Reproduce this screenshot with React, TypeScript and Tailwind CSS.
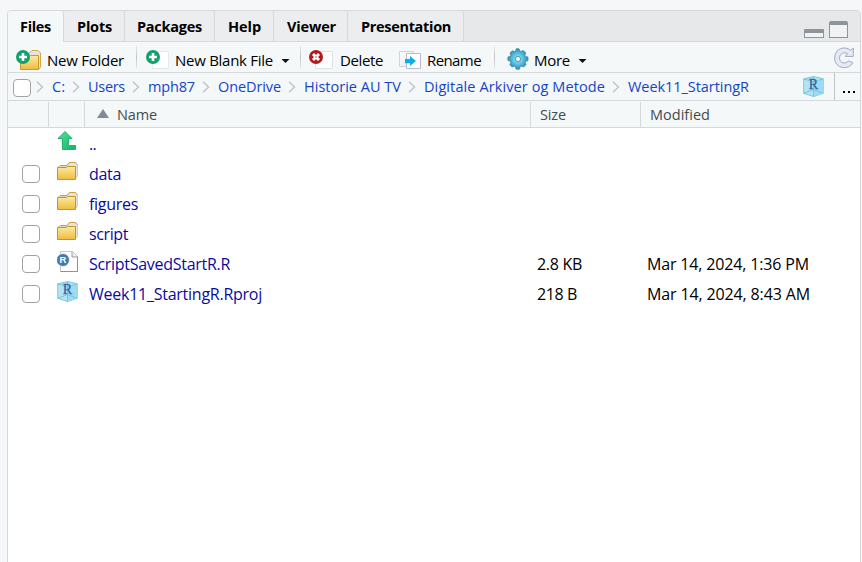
import { useLayoutEffect, useRef, useState } from "react";
import type { ReactNode } from "react";

/* Single line of text whose tracking is adjusted to fill a given width. */
function Fit({ w, children, className = "" }: { w: number; children: string; className?: string }) {
  const ref = useRef<HTMLSpanElement>(null);
  const [ls, setLs] = useState(0);
  useLayoutEffect(() => {
    if (ref.current) setLs((w - 1 - ref.current.getBoundingClientRect().width) / children.length);
  }, []);
  return (
    <span className={`flex shrink-0 pl-px ${className}`} style={{ width: w }}>
      <span ref={ref} className="whitespace-pre" style={{ letterSpacing: ls }}>{children}</span>
    </span>
  );
}

function Gradients() {
  return (
    <svg width="0" height="0" className="absolute">
      <defs>
        <linearGradient id="folder" x1="0" y1="0" x2="0" y2="1">
          <stop offset="0" stopColor="#f9eca6" />
          <stop offset="1" stopColor="#f0bb3c" />
        </linearGradient>
        <linearGradient id="arrow" x1="0" y1="0" x2="1" y2="1">
          <stop offset="0" stopColor="#52e09b" />
          <stop offset="1" stopColor="#16b466" />
        </linearGradient>
        <linearGradient id="page" x1="0" y1="0" x2="1" y2="1">
          <stop offset="0" stopColor="#ffffff" />
          <stop offset="1" stopColor="#e2e6ec" />
        </linearGradient>
        <radialGradient id="gear">
          <stop offset="0.2" stopColor="#7fe0f2" />
          <stop offset="1" stopColor="#2493c4" />
        </radialGradient>
      </defs>
    </svg>
  );
}

function Folder() {
  return (
    <svg width="22" height="20" viewBox="0 0 22 20" className="shrink-0">
      <path d="M1.5 6.5 L10 4.5 L12.5 1.5 H18.5 L20.5 3.5 V15.5 L18.5 17.5 H3 Z" fill="#e6e4df" stroke="#d9cda6" />
      <path d="M1.5 6 L3 4.5 H10 L12.5 1.5 H18.3 L20 3.6" fill="none" stroke="#c8a23e" />
      <path d="M.5 6.5 H9 L10.5 5.5 H18.5 V18.5 H.5 Z" fill="url(#folder)" stroke="#c2962e" />
    </svg>
  );
}

function Plus() {
  return (
    <>
      <circle cx="7" cy="7" r="7" fill="#12a06b" />
      <path d="M7 3 V11 M3 7 H11" stroke="#fff" strokeWidth="2.6" />
    </>
  );
}

function NewFolder() {
  return (
    <svg width="26" height="22" viewBox="0 0 26 22" className="shrink-0">
      <path d="M10 6 L14 2.5 L16 .5 H22 L24.5 3 V17 L22.5 19.5 H5 Z" fill="#e6e4df" stroke="#d0a845" />
      <path d="M4.5 6.5 H13 L14.5 5.5 H22.5 V19.5 H4.5 Z" fill="url(#folder)" stroke="#c99a2e" />
      <Plus />
    </svg>
  );
}

function NewFile() {
  return (
    <svg width="24" height="20" viewBox="0 0 24 20" className="shrink-0">
      <path d="M6.5 1.5 H22.5 V18.5 H6.5 Z" fill="#fff" stroke="#e4e9ee" />
      <Plus />
    </svg>
  );
}

function DeleteIcon() {
  return (
    <svg width="24" height="20" viewBox="0 0 24 20" className="shrink-0">
      <path d="M6.5 1.5 H23.5 V18.5 H6.5 Z" fill="#fff" stroke="#dfe3e8" />
      <circle cx="7" cy="7" r="7" fill="#b01c1c" />
      <path d="M4 4 L10 10 M10 4 L4 10" stroke="#fff" strokeWidth="3" />
      <circle cx="7" cy="7" r=".7" fill="#b01c1c" />
    </svg>
  );
}

function RenameIcon() {
  return (
    <svg width="22" height="19" viewBox="0 0 22 19" className="shrink-0">
      <path d="M.5 .5 H14.5 V15.5 H.5 Z" fill="url(#page)" stroke="#d0d4da" />
      <path d="M7.5 2.5 H21.5 V17.5 H7.5 Z" fill="#fff" stroke="#b9bec6" />
      <path d="M6 8 H11 V5 L17 10 L11 15 V12.3 H6 Z" fill="#0caef0" />
    </svg>
  );
}

function GearIcon() {
  return (
    <svg width="22" height="22" viewBox="0 0 22 22" className="shrink-0">
      <g fill="url(#gear)" stroke="#50808f" strokeWidth=".8" strokeLinejoin="round">
        <path d="M9.3 .8 H12 L13.3 3.8 L16.1 2.5 L18.7 4.8 L17.7 7.9 L21 9.2 V12.6 L17.9 13.6 L19 16.6 L16.8 18.9 L13.6 17.8 L12.4 21.2 H9.2 L8.2 17.9 L5.1 19 L2.9 16.7 L4.1 13.7 L.9 12.3 V9.1 L4.1 8 L3 4.9 L5.3 2.8 L8.2 4 Z" />
      </g>
      <circle cx="11" cy="11" r="2.6" fill="#e9f4f7" stroke="#5b98ac" />
    </svg>
  );
}

function Project() {
  return (
    <svg width="21" height="21" viewBox="0 0 21 21" className="shrink-0">
      <path d="M10.5 .5 L20.2 2.8 V17.3 L10.5 20.5 L.7 17.3 V2.8 Z" fill="#b3e4f6" stroke="#7fc8d8" />
      <path d="M10.5 7 L20 3 V17.3 L10.5 20.5 Z" fill="#9cdcf3" />
      <path d="M.7 2.8 L10.5 6 L20.2 2.8 M10.5 .5 V20.5 M.7 17.3 L10.5 13.5 L20.2 17.3" fill="none" stroke="#68bfd0" strokeWidth=".8" />
      <text x="10.4" y="13.4" textAnchor="middle" className="fill-[#33629f] font-['Liberation_Serif',serif] text-[14px]" stroke="#33629f" strokeWidth=".3">R</text>
    </svg>
  );
}

function RFile() {
  return (
    <svg width="22" height="22" viewBox="0 0 22 22" className="shrink-0">
      <path d="M3.5 .5 H15.5 L20.5 5.5 V20.5 H3.5 Z" fill="#fff" stroke="#c3c6ca" />
      <path d="M3.5 20.5 H20.5 V5.5" fill="none" stroke="#8e9398" />
      <path d="M15 .8 V6 H20.5" fill="#eee" stroke="#999da2" />
      <circle cx="6" cy="9" r="6.4" fill="#4777ae" stroke="#fff" strokeWidth=".6" />
      <text x="6" y="12.4" textAnchor="middle" className="fill-white font-['Liberation_Sans',sans-serif] text-[9.5px] font-bold">R</text>
    </svg>
  );
}

function UpIcon() {
  return (
    <svg width="20" height="20" viewBox="0 0 20 20" className="shrink-0">
      <path d="M8 .5 L15 7.5 H11.5 V14.5 H18.5 V18.5 H5.5 V7.5 H1 Z" fill="url(#arrow)" stroke="#1db46c" strokeLinejoin="round" />
    </svg>
  );
}

function Refresh() {
  return (
    <svg width="20" height="22" viewBox="0 0 20 22" className="shrink-0">
      <path d="M16.6 3.3 L19.3 1 V9.4 H11.2 L13.5 6.6 C10.5 4.5 5.5 6.5 5.5 11.1 C5.5 16 11.7 17.7 14.4 13.9 L18.7 15.6 C15.5 23.2 .7 22.5 .7 11 C.7 .8 11.5 -1.3 16.6 3.3 Z" fill="#e6eaf8" stroke="#a3a9b7" strokeLinejoin="round" />
    </svg>
  );
}

const Chevron = () => (
  <svg width="8" height="12" viewBox="0 0 8 12" className="shrink-0">
    <path d="M1 .8 L6.5 6 L1 11.2" fill="none" stroke="#bcc1c6" strokeWidth="1.3" />
  </svg>
);

const Caret = () => (
  <svg width="9" height="4" viewBox="0 0 9 4" className="shrink-0">
    <path d="M.5 0 H8.5 L4.5 4 Z" fill="#111" />
  </svg>
);

const Separator = () => <div className="h-[22px] w-px shrink-0 bg-linear-to-b from-[#e6e9eb] via-[#bfc3c7] to-[#e3e6e9]" />;
const Checkbox = () => <div className="size-[18px] shrink-0 rounded-[4px] border border-[#a2a3a5] bg-white" />;

const tabs: [string, number, string][] = [
  ["Files", 32, "w-[56px] pl-[11px] bg-[#f4f8f9]"],
  ["Plots", 36, "w-[61px] pl-[12px]"],
  ["Packages", 66, "w-[90px] pl-[11px]"],
  ["Help", 34, "w-[59px] pl-[12px]"],
  ["Viewer", 50, "w-[74px] pl-[12px]"],
  ["Presentation", 91, "w-[116px] pl-[12px]"],
];

const crumbs: [string, number][] = [
  ["C:", 14],
  ["Users", 38],
  ["mph87", 48],
  ["OneDrive", 64],
  ["Historie AU TV", 98],
  ["Digitale Arkiver og Metode", 182],
  ["Week11_StartingR", 122],
];

type Row = { icon: ReactNode; name: string; w: number; size?: [string, number]; date?: [string, number]; up?: boolean };
const rows: Row[] = [
  { icon: <UpIcon />, name: "..", w: 8, up: true },
  { icon: <Folder />, name: "data", w: 33 },
  { icon: <Folder />, name: "figures", w: 50 },
  { icon: <Folder />, name: "script", w: 40 },
  { icon: <RFile />, name: "ScriptSavedStartR.R", w: 142, size: ["2.8 KB", 46], date: ["Mar 14, 2024, 1:36 PM", 163] },
  { icon: <Project />, name: "Week11_StartingR.Rproj", w: 174, size: ["218 B", 41], date: ["Mar 14, 2024, 8:43 AM", 164] },
];

export default function App() {
  return (
    <div className="h-[562px] w-[862px] overflow-hidden bg-[#f5f7f9] pt-[10px] pl-[7px] font-['Open_Sans','Noto_Sans',sans-serif] text-[15px] leading-5 text-black">
      <Gradients />
      <div className="flex h-[560px] w-[854px] flex-col rounded-t-[4px] border border-[#d5d9dc] bg-white">
        <div className="flex h-[31px] shrink-0 rounded-t-[3px] bg-[#e6e8ea]">
          {tabs.map(([t, w, c], i) => (
            <div key={t} className={`flex shrink-0 rounded-t-[3px] border-r border-[#d5d9dc] pt-[6px] text-[14.5px] font-bold ${c} ${i ? "border-b bg-[#ebedef]" : ""}`}>
              <Fit w={w}>{t}</Fit>
            </div>
          ))}
          <div className="flex flex-1 justify-end gap-[5px] border-b border-[#d5d9dc] pr-[12px]">
            <div className="mt-[18px] h-[9px] w-5 rounded-t-[1px] border border-t-4 border-[#8c959b] bg-[#f1f2f3]" />
            <div className="mt-[10px] h-[17px] w-[19px] rounded-t-[2px] border border-t-4 border-[#8c959b] bg-[#f1f2f3]" />
          </div>
        </div>

        <div className="flex h-[31px] shrink-0 items-start border-b border-[#d5d9dc] bg-[#f4f8f9] pl-2">
          <div className="mt-2 flex"><NewFolder /></div>
          <Fit w={78} className="mt-2 ml-1">New Folder</Fit>
          <div className="mt-1 ml-[12px]"><Separator /></div>
          <div className="mt-2 ml-[9px] flex"><NewFile /></div>
          <Fit w={99} className="mt-2 ml-1">New Blank File</Fit>
          <div className="mt-[17px] ml-[8px] flex"><Caret /></div>
          <div className="mt-1 ml-[10px]"><Separator /></div>
          <div className="mt-2 ml-[8px] flex"><DeleteIcon /></div>
          <Fit w={44} className="mt-2 ml-[6px]">Delete</Fit>
          <div className="mt-[9px] ml-[16px] flex"><RenameIcon /></div>
          <Fit w={55} className="mt-2 ml-[5px]">Rename</Fit>
          <div className="mt-1 ml-[13px]"><Separator /></div>
          <div className="mt-[6px] ml-[12px] flex"><GearIcon /></div>
          <Fit w={37} className="mt-2 ml-1">More</Fit>
          <div className="mt-[17px] ml-[8px] flex"><Caret /></div>
          <div className="mt-[5px] mr-[6px] ml-auto flex"><Refresh /></div>
        </div>

        <div className="flex h-[28px] shrink-0 items-center border-b border-[#d5d9dc] bg-[#f4f8f9] pl-[5px] text-[14.5px] text-[#1744c5]">
          <div className="mt-[3px]"><Checkbox /></div>
          <div className="flex items-center gap-[7px] pl-[5px]">
            {crumbs.map(([t, w]) => (
              <div key={t} className="flex items-center gap-[7px]">
                <Chevron />
                <Fit w={w}>{t}</Fit>
              </div>
            ))}
          </div>
          <div className="mr-[10px] ml-auto -mt-px flex"><Project /></div>
          <div className="flex h-[27px] w-[26px] items-end gap-[3px] border-l border-[#bfc4c8] pb-[7px] pl-[8px]">
            <i className="size-[2px] bg-black" /><i className="size-[2px] bg-black" /><i className="size-[2px] bg-black" />
          </div>
        </div>

        <div className="flex h-[27px] shrink-0 border-b border-[#d5d9dc] bg-[#f4f8f9] pt-px text-[14.5px] text-[#444b51]">
          <div className="w-[41px] border-r border-[#d5d9dc]" />
          <div className="w-[36px] border-r border-[#d5d9dc]" />
          <div className="flex w-[446px] border-r border-[#d5d9dc] pl-[12px]">
            <svg width="12" height="9" className="mt-[7px]"><path d="M6 0 L12 9 H0 Z" fill="#808a98" /></svg>
            <Fit w={41} className="mt-[3px] ml-[7px]">Name</Fit>
          </div>
          <div className="w-[110px] border-r border-[#d5d9dc] pt-[3px] pl-[8px]"><Fit w={27}>Size</Fit></div>
          <div className="pt-[3px] pl-[8px]"><Fit w={61}>Modified</Fit></div>
        </div>

        <div className="pt-px text-[16px]">
          {rows.map((r) => (
            <div key={r.name} className="flex h-[30px] items-start">
              <div className="w-[49px] pt-[6px] pl-[14px]">{!r.up && <Checkbox />}</div>
              <div className="flex w-[31px] pt-[2px]">{r.icon}</div>
              <div className="w-[448px] pt-[5px] text-[#0a0aa0]"><Fit w={r.w}>{r.name}</Fit></div>
              <div className="w-[110px] pt-[5px]">{r.size && <Fit w={r.size[1]}>{r.size[0]}</Fit>}</div>
              <div className="pt-[5px]">{r.date && <Fit w={r.date[1]}>{r.date[0]}</Fit>}</div>
            </div>
          ))}
        </div>
      </div>
    </div>
  );
}
